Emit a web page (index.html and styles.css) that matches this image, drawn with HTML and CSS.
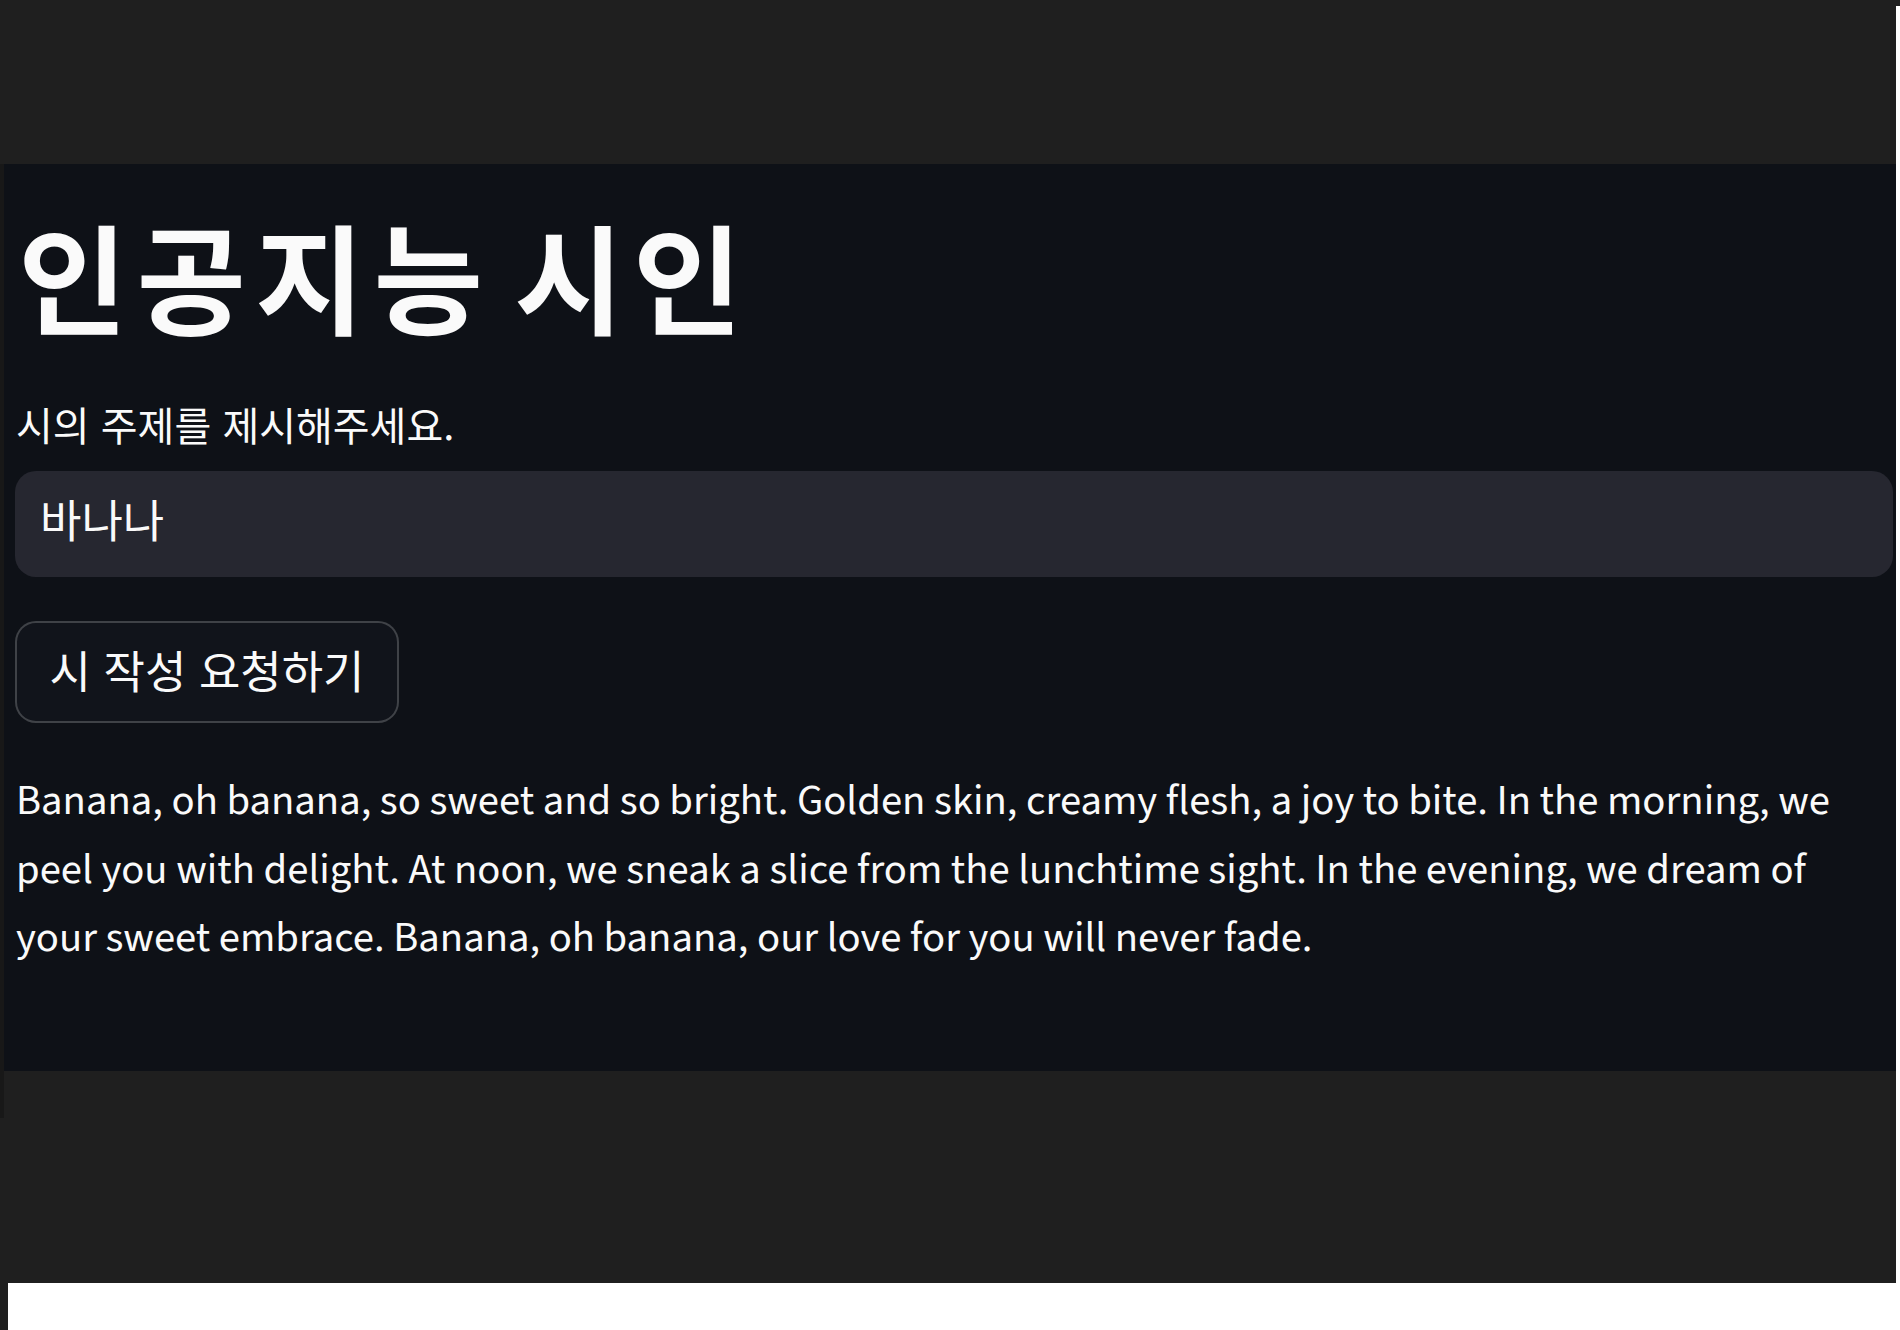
FILE: index.html
```html
<!DOCTYPE html>
<html lang="ko">
<head>
<meta charset="utf-8">
<title>인공지능 시인</title>
<link rel="stylesheet" href="styles.css">
</head>
<body>
<div class="cap"></div>
<div class="stage">
  <div class="rail"></div>
  <div class="column">
    <div class="topbar"></div>
    <main class="app">
      <h1 class="title">인공지능 시인</h1>
      <label class="label" for="topic">시의 주제를 제시해주세요.</label>
      <div class="input"><span id="topic" class="input-text">바나나</span></div>
      <button class="btn" type="button">시 작성 요청하기</button>
      <p class="poem">Banana, oh banana, so sweet and so bright. Golden skin, creamy flesh, a joy to bite. In the morning, we peel you with delight. At noon, we sneak a slice from the lunchtime sight. In the evening, we dream of your sweet embrace. Banana, oh banana, our love for you will never fade.</p>
    </main>
  </div>
</div>
<div class="foot"></div>
</body>
</html>
```
FILE: styles.css
```css
html, body {
  margin: 0;
  padding: 0;
}
body {
  width: 1900px;
  height: 1330px;
  overflow: hidden;
  background: #ffffff;
  font-family: "Noto Sans CJK KR", "Noto Sans", sans-serif;
  color: #fafafa;
}
.cap {
  height: 6px;
  background: #1f1f1f;
}
.stage {
  display: flex;
  height: 1277px;
  margin-right: 4px;
  background: #1f1f1f;
}
.rail {
  width: 4px;
  flex: none;
  margin-top: 158px;
  height: 954px;
  background: #181818;
}
.column {
  flex: 1;
  display: flex;
  flex-direction: column;
}
.topbar {
  height: 158px;
  flex: none;
}
.app {
  height: 907px;
  box-sizing: border-box;
  background: #0e1117;
  padding: 40px 3px 0 11px;
  display: flex;
  flex-direction: column;
  align-items: flex-start;
}
.title {
  margin: 0;
  font-family: "Noto Sans CJK KR", sans-serif;
  font-size: 119px;
  font-weight: 700;
  line-height: 140px;
  letter-spacing: 9px;
  word-spacing: -20px;
  padding-left: 3px;
}
.label {
  margin-top: 54px;
  font-family: "Noto Sans CJK KR", sans-serif;
  font-size: 40px;
  line-height: 52px;
  padding-left: 1px;
}
.input {
  margin-top: 21px;
  align-self: stretch;
  height: 106px;
  box-sizing: border-box;
  background: #262730;
  border-radius: 21px;
  display: flex;
  align-items: center;
  padding: 0 0 11px 25px;
}
.input-text {
  font-family: "Noto Sans CJK KR", sans-serif;
  font-size: 45px;
  line-height: 1;
}
.btn {
  margin-top: 44px;
  width: 384px;
  height: 102px;
  box-sizing: border-box;
  background: #11141b;
  border: 2px solid rgba(250, 250, 250, 0.2);
  border-radius: 21px;
  color: #fafafa;
  font-family: "Noto Sans CJK KR", sans-serif;
  font-size: 45px;
  line-height: 1;
  padding: 0 0 6px 0;
  display: flex;
  align-items: center;
  justify-content: center;
}
.poem {
  margin: 44px 0 0 0;
  font-family: "Source Sans Pro", "Source Sans 3", "Noto Sans CJK KR", sans-serif;
  font-size: 42.7px;
  line-height: 68.5px;
  padding-left: 1px;
}
.foot {
  height: 47px;
  border-left: 8px solid #1f1f1f;
  background: #ffffff;
}
```
